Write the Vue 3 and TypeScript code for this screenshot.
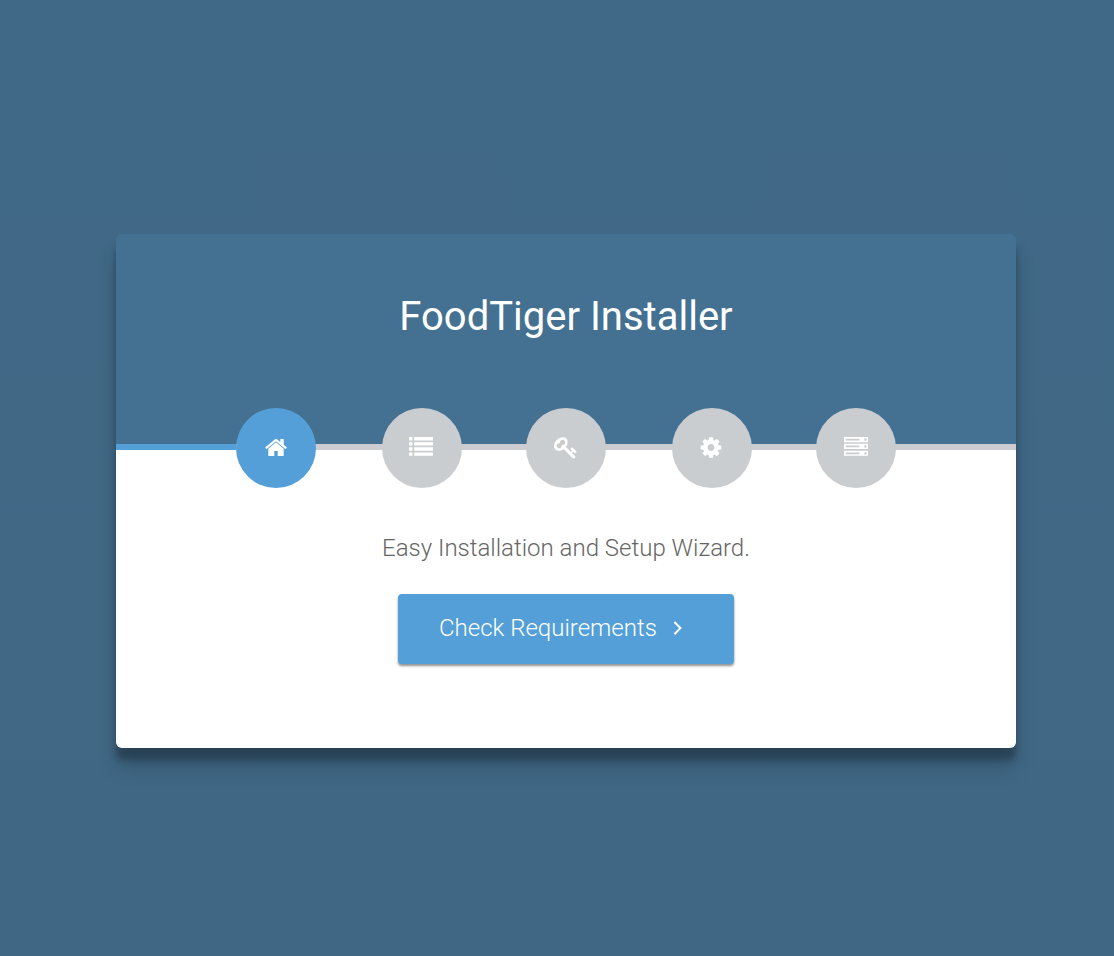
<script setup lang="ts">
interface Step {
  name: string
  path: string
  active?: boolean
}

// Four list rows: a square bullet followed by a long bar
const listPath = [128, 512, 896, 1280]
  .map((y) => `M0 ${y}h256v256h-256zM384 ${y}h1408v256h-1408z`)
  .join('')

const steps: Step[] = [
  {
    name: 'home',
    active: true,
    path: 'M1472 992v480q0 26-19 45t-45 19h-384v-384h-256v384h-384q-26 0-45-19t-19-45v-480q0-1 .5-3t.5-3l575-474 575 474q1 2 1 6zm223-69l-62 74q-8 9-21 11h-3q-13 0-21-7l-692-577-692 577q-12 8-24 7-13-2-21-11l-62-74q-8-10-7-23.5t11-21.5l719-599q32-26 76-26t76 26l244 204v-195q0-14 9-23t23-9h192q14 0 23 9t9 23v408l219 182q10 8 11 21.5t-7 23.5z',
  },
  { name: 'list', path: listPath },
  {
    name: 'key',
    path: 'M832 512q0-80-56-136t-136-56-136 56-56 136q0 42 19 83-41-19-83-19-80 0-136 56t-56 136 56 136 136 56 136-56 56-136q0-42-19-83 41 19 83 19 80 0 136-56t56-136zm851 704q0 17-49 66t-66 49q-9 0-28.5-16t-36.5-33-38.5-40-24.5-26l-96 96 220 220q28 28 28 68 0 42-39 81t-81 39q-40 0-68-28l-671-671q-176 131-365 131-163 0-265.5-102.5t-102.5-265.5q0-160 95-313t248-248 313-95q163 0 265.5 102.5t102.5 265.5q0 189-131 365l355 355 96-96q-3-3-26-24.5t-40-38.5-33-36.5-16-28.5q0-17 49-66t66-49q13 0 23 10 6 6 46 44.5t82 79.5 86.5 86 73 78 28.5 41z',
  },
  {
    name: 'cog',
    path: 'M1152 896q0-106-75-181t-181-75-181 75-75 181 75 181 181 75 181-75 75-181zm512-109v222q0 12-8 23t-20 13l-185 28q-19 54-39 91 35 50 107 138 10 12 10 25t-9 23q-27 37-99 108t-94 71q-12 0-26-9l-138-108q-44 23-91 38-16 136-29 186-7 28-36 28h-222q-14 0-24.5-8.5t-11.5-21.5l-28-184q-49-16-90-37l-141 107q-10 9-25 9-14 0-25-11-126-114-165-168-7-10-7-23 0-12 8-23 15-21 51-66.5t54-70.5q-27-50-41-99l-183-27q-13-2-21-12.5t-8-23.5v-222q0-12 8-23t19-13l186-28q14-46 39-92-40-57-107-138-10-12-10-24 0-10 9-23 26-36 98.5-107.5t94.5-71.5q13 0 26 10l138 107q44-23 91-38 16-136 29-186 7-28 36-28h222q14 0 24.5 8.5t11.5 21.5l28 184q49 16 90 37l142-107q9-9 24-9 13 0 25 10 129 119 165 170 7 8 7 22 0 12-8 23-15 21-51 66.5t-54 70.5q26 50 41 98l183 28q13 2 21 12.5t8 23.5z',
  },
  {
    name: 'server',
    path: 'M128 1408h1024v-128h-1024v128zm0-512h1024v-128h-1024v128zm1568 448q0-40-28-68t-68-28-68 28-28 68 28 68 68 28 68-28 28-68zm-1568-960h1024v-128h-1024v128zm1568 448q0-40-28-68t-68-28-68 28-28 68 28 68 68 28 68-28 28-68zm0-512q0-40-28-68t-68-28-68 28-28 68 28 68 68 28 68-28 28-68zm96 832v384h-1792v-384h1792zm0-512v384h-1792v-384h1792zm0-512v384h-1792v-384h1792z',
  },
]
</script>

<template>
  <div class="master">
    <main class="box">
      <header class="header">
        <h1 class="title">FoodTiger Installer</h1>
      </header>
      <div class="track">
        <span class="line line-active"></span>
        <ul class="steps">
          <li v-for="step in steps" :key="step.name" class="step" :class="{ active: step.active }">
            <svg class="icon" :class="`icon-${step.name}`" viewBox="0 0 1792 1792">
              <path :d="step.path" fill="currentColor" fill-rule="evenodd" />
            </svg>
          </li>
        </ul>
        <span class="line"></span>
      </div>
      <section class="content">
        <p class="message">Easy Installation and Setup Wizard.</p>
        <button class="button" type="button">
          <span>Check Requirements</span>
          <svg class="chevron" viewBox="0 0 10 16">
            <path d="M1.4 2 7.4 8.1 1.4 14.2" fill="none" stroke="currentColor" stroke-width="2" />
          </svg>
        </button>
      </section>
    </main>
  </div>
</template>

<style>
body {
  margin: 0;
}
</style>

<style scoped>
.master {
  box-sizing: border-box;
  height: 956px;
  padding: 234px 98px 0 116px;
  overflow: hidden;
  background: linear-gradient(#406987, #406885);
  font-family: Roboto, 'Liberation Sans', sans-serif;
}
.box {
  width: 900px;
  height: 514px;
  border-radius: 6px;
  background: linear-gradient(#447192 210px, #fff 210px);
  box-shadow: 0 20px 20px rgba(0, 0, 0, 0.19), 0 12px 6px rgba(0, 0, 0, 0.23);
}
.header {
  box-sizing: border-box;
  height: 210px;
  padding-top: 53px;
}
.title {
  margin: 0;
  color: #fff;
  font-size: 40px;
  font-weight: 400;
  line-height: 60px;
  text-align: center;
}
.track {
  display: flex;
  align-items: center;
  height: 6px;
  background: #cbcdd0;
}
.line {
  flex: 1;
  height: 6px;
}
.line-active {
  background: #549fd7;
}
.steps {
  display: grid;
  grid-template-columns: 146px 144px 146px 144px 80px;
  margin: 2px 0 0;
  padding: 0;
  list-style: none;
}
.step {
  display: flex;
  align-items: center;
  justify-content: center;
  width: 80px;
  height: 80px;
  border-radius: 50%;
  background: #cacdd0;
  color: #fff;
}
.step.active {
  background: #549fd7;
}
.icon {
  width: 24px;
  height: 24px;
  transform: translateY(-0.5px);
}
.icon-list,
.icon-server {
  transform: translateY(-0.7px);
}
.icon-list,
.icon-cog {
  margin-right: 2px;
}
.content {
  display: flex;
  flex-direction: column;
  align-items: center;
  padding-top: 80px;
}
.message {
  margin: 0 0 28px;
  color: #666;
  font-size: 24px;
  font-weight: 300;
  line-height: 36px;
}
.button {
  display: flex;
  align-items: center;
  gap: 16px;
  box-sizing: border-box;
  width: 336px;
  height: 70px;
  padding: 0 0 2px 41px;
  border: 0;
  border-radius: 4px;
  background: #549fd7;
  box-shadow: 0 2px 3px rgba(0, 0, 0, 0.24), 0 2px 2px rgba(0, 0, 0, 0.24);
  color: #fff;
  font: 300 24px/36px Roboto, 'Liberation Sans', sans-serif;
  white-space: nowrap;
}
.chevron {
  width: 10px;
  height: 16px;
}
</style>
